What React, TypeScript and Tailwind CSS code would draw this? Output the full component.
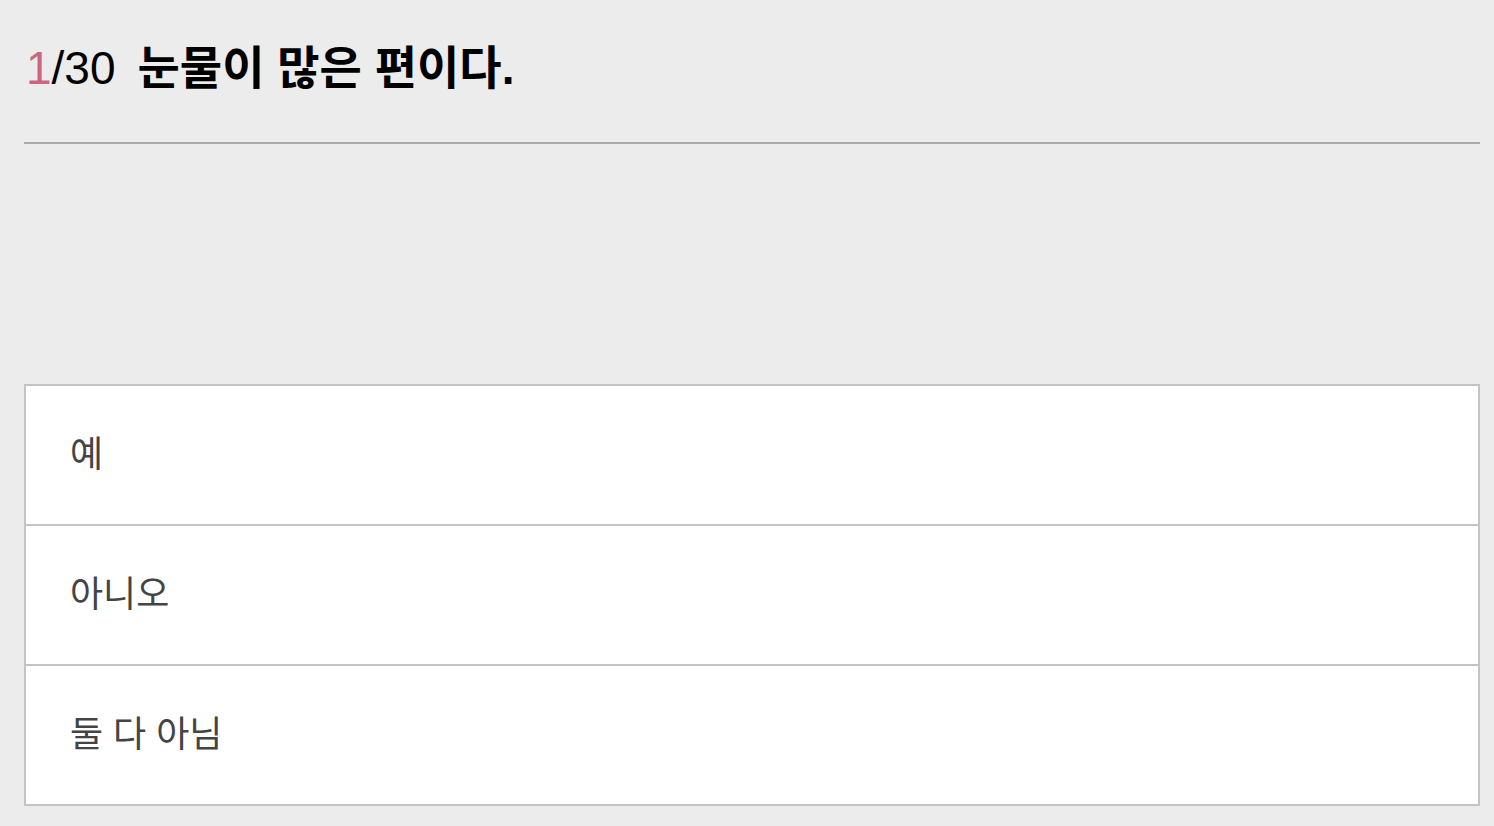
const options = ['예', '아니오', '둘 다 아님']

export default function App() {
  return (
    <div
      className="min-h-screen bg-[#ececec] pl-[24px] pr-[14px] pt-[36px] pb-[20px]"
      style={{ fontFamily: '"Liberation Sans", "Noto Sans CJK KR", sans-serif' }}
    >
      {/* Question header */}
      <div className="flex items-baseline h-[64px] pl-[2px] text-[46px] leading-[64px] text-black">
        <span className="font-normal">
          <span className="text-[#cc6582]">1</span>/30
        </span>
        <span className="ml-[22px] font-bold">눈물이 많은 편이다.</span>
      </div>
      <div className="mt-[42px] border-t-2 border-[#aaaaaa]" />

      {/* Answers */}
      <div className="mt-[240px] border-2 border-[#c4c4c4] bg-white">
        {options.map((label, i) => (
          <button
            key={label}
            className={`flex w-full items-center pl-[44px] text-left text-[36px] text-[#444444] ${
              i > 0 ? 'h-[140px] border-t-2 border-[#c4c4c4]' : 'h-[138px]'
            }`}
          >
            {label}
          </button>
        ))}
      </div>
    </div>
  )
}
